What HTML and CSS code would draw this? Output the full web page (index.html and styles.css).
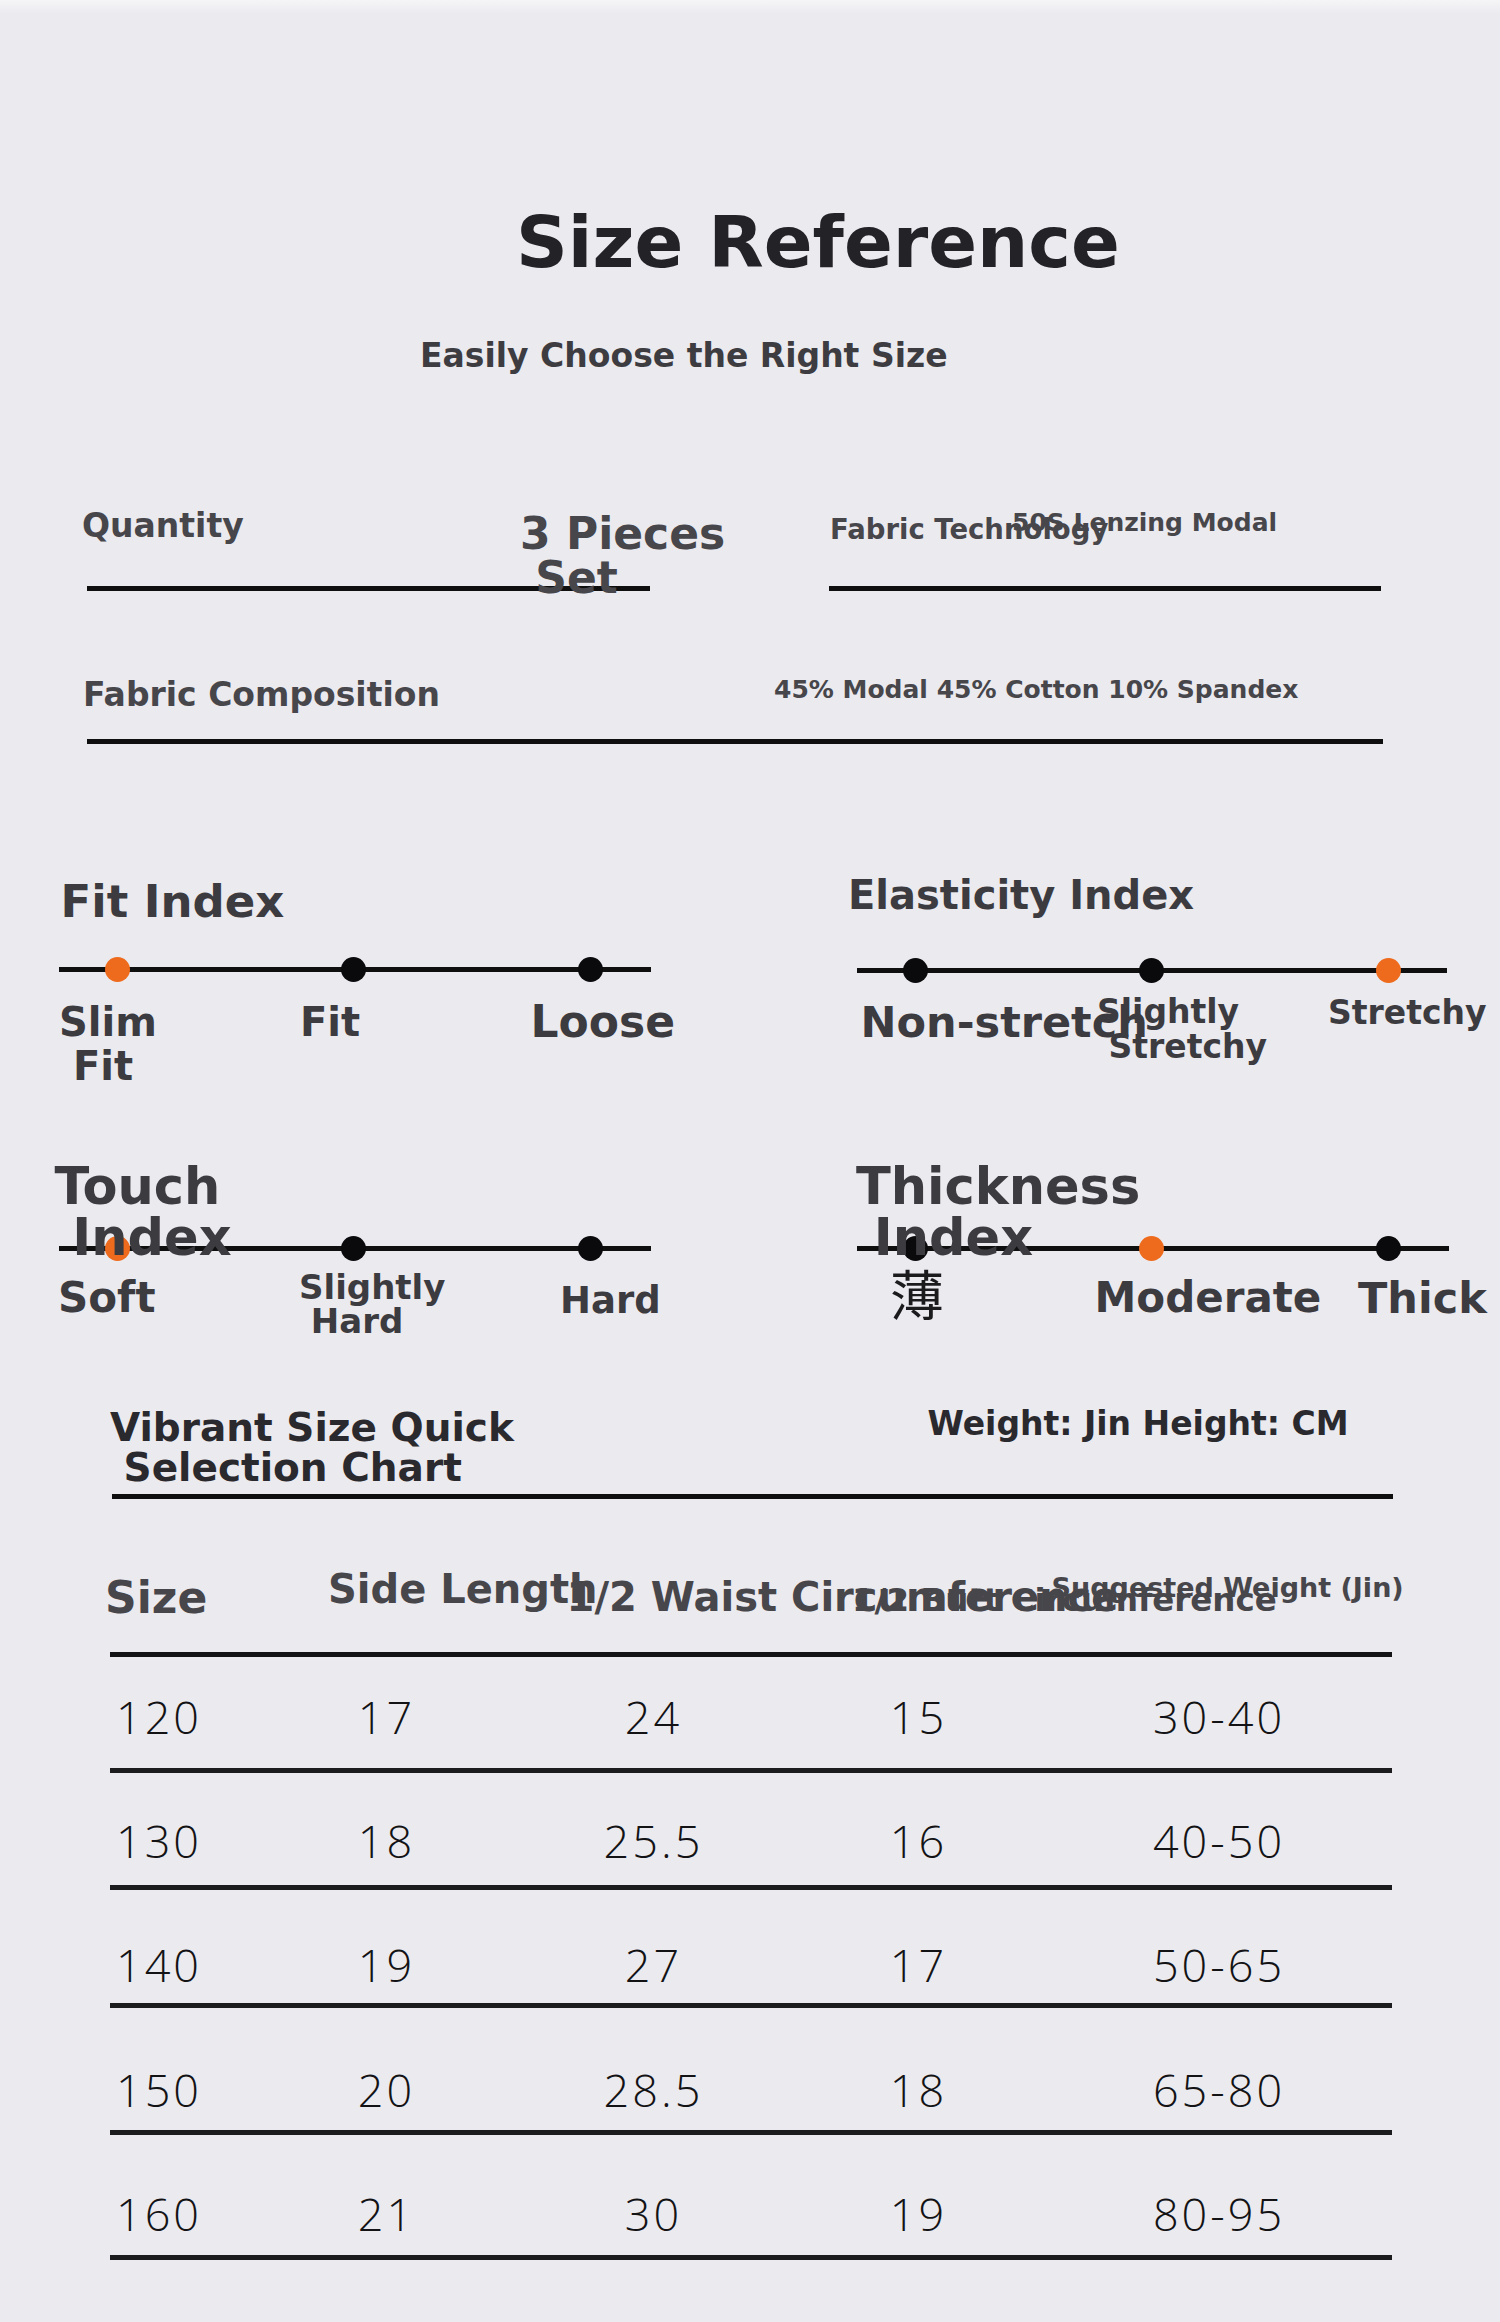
FILE: index.html
```html
<!DOCTYPE html>
<html lang="en">
<head>
<meta charset="utf-8">
<title>Size Reference</title>
<link rel="stylesheet" href="styles.css">
</head>
<body>
<div class="page">
  <header class="hero">
    <h1 class="hero-title">Size Reference</h1>
    <p class="hero-sub">Easily Choose the Right Size</p>
  </header>

  <section class="info">
    <div class="info-row">
      <div class="field qty">
        <span class="qty-label">Quantity</span>
        <span class="qty-value">3 Pieces<br>&nbsp;Set</span>
      </div>
      <div class="field tech">
        <span class="tech-label">Fabric Technology</span>
        <span class="tech-value">50S Lenzing Modal</span>
      </div>
    </div>
    <div class="field comp">
      <span class="comp-label">Fabric Composition</span>
      <span class="comp-value">45% Modal 45% Cotton 10% Spandex</span>
    </div>
  </section>

  <section class="indexes">
    <div class="idx">
      <h2 class="idx-title t-fit">Fit Index</h2>
      <div class="track track-a"><i class="dot on"></i><i class="dot"></i><i class="dot"></i></div>
      <div class="labels labels-a">
        <span class="lbl l-slim">Slim<br>&nbsp;Fit</span>
        <span class="lbl l-fit">Fit</span>
        <span class="lbl l-loose">Loose</span>
      </div>
    </div>
    <div class="idx">
      <h2 class="idx-title t-elastic">Elasticity Index</h2>
      <div class="track track-b"><i class="dot"></i><i class="dot"></i><i class="dot on"></i></div>
      <div class="labels labels-a">
        <span class="lbl l-non">Non-stretch</span>
        <span class="lbl l-sls">Slightly<br>&nbsp;Stretchy</span>
        <span class="lbl l-str">Stretchy</span>
      </div>
    </div>
    <div class="idx">
      <h2 class="idx-title t-two">Touch<br>&nbsp;Index</h2>
      <div class="track track-c"><i class="dot on"></i><i class="dot"></i><i class="dot"></i></div>
      <div class="labels labels-b">
        <span class="lbl l-soft">Soft</span>
        <span class="lbl l-slh">Slightly<br>&nbsp;Hard</span>
        <span class="lbl l-hard">Hard</span>
      </div>
    </div>
    <div class="idx">
      <h2 class="idx-title t-two t-thick">Thickness<br>&nbsp;Index</h2>
      <div class="track track-c"><i class="dot"></i><i class="dot on"></i><i class="dot"></i></div>
      <div class="labels labels-b">
        <span class="lbl l-bo">薄</span>
        <span class="lbl l-mod">Moderate</span>
        <span class="lbl l-thk">Thick</span>
      </div>
    </div>
  </section>

  <section class="chart">
    <h2 class="chart-title">Vibrant Size Quick<br>&nbsp;Selection Chart</h2>
    <p class="chart-unit">Weight: Jin Height: CM</p>
  </section>

  <section class="table">
    <div class="thead">
      <span class="th th-size">Size</span>
      <span class="th th-side">Side Length</span>
      <span class="th th-waist">1/2 Waist Circumference</span>
      <span class="th th-hem">1/2 Butt Circumference</span>
      <span class="th th-weight">Suggested Weight (Jin)</span>
    </div>
    <div class="tr r1"><span class="td">120</span><span class="td">17</span><span class="td">24</span><span class="td">15</span><span class="td">30-40</span></div>
    <div class="tr r2"><span class="td">130</span><span class="td">18</span><span class="td">25.5</span><span class="td">16</span><span class="td">40-50</span></div>
    <div class="tr r3"><span class="td">140</span><span class="td">19</span><span class="td">27</span><span class="td">17</span><span class="td">50-65</span></div>
    <div class="tr r4"><span class="td">150</span><span class="td">20</span><span class="td">28.5</span><span class="td">18</span><span class="td">65-80</span></div>
    <div class="tr r5"><span class="td">160</span><span class="td">21</span><span class="td">30</span><span class="td">19</span><span class="td">80-95</span></div>
  </section>
</div>
</body>
</html>
```

FILE: styles.css
```css
html, body {
  margin: 0;
  padding: 0;
  background: #ebeaef;
}

.page {
  width: 1500px;
  min-height: 2322px;
  overflow: hidden;
  background: linear-gradient(#f5f5f7 0, #ebeaef 14px) no-repeat;
  background-color: #ebeaef;
  font-family: "DejaVu Sans", "Noto Sans CJK SC", sans-serif;
  font-weight: 700;
  color: #3c3b40;
}

h1, h2, p {
  margin: 0;
  font-weight: 700;
}

/* ---------- hero ---------- */
.hero {
  padding-top: 206px;
}
.hero-title {
  font-size: 72px;
  line-height: 72px;
  margin-left: 516px;
  color: #232226;
}
.hero-sub {
  font-size: 33px;
  line-height: 40px;
  margin: 58px 0 0 420px;
  color: #3d3c41;
}

/* ---------- info ---------- */
.info {
  margin-top: 124px;
  padding-left: 87px;
  color: #47464b;
}
.info-row {
  display: grid;
  grid-template-columns: 563px 552px;
  column-gap: 179px;
}
.field {
  border-bottom: 5px solid #0f0f10;
  white-space: nowrap;
}
.qty, .tech {
  height: 86px;
}
.qty {
  display: flex;
  align-items: flex-start;
}
.qty-label {
  flex: none;
  width: 438px;
  font-size: 33px;
  line-height: 40px;
  margin: 5.6px 0 0 -5px;
}
.qty-value {
  font-size: 44px;
  line-height: 44px;
  margin-top: 11.8px;
}
.tech {
  display: grid;
  align-items: start;
}
.tech-label, .tech-value {
  grid-area: 1 / 1;
}
.tech-label {
  font-size: 27.5px;
  line-height: 34px;
  margin: 11.5px 0 0 1px;
}
.tech-value {
  font-size: 25px;
  line-height: 30px;
  margin: 8.4px 0 0 183px;
}
.comp {
  width: 1296px;
  height: 79px;
  margin-top: 69px;
  display: flex;
  align-items: flex-start;
}
.comp-label {
  flex: none;
  width: 691px;
  font-size: 33px;
  line-height: 40px;
  margin: 14.6px 0 0 -4px;
}
.comp-value {
  font-size: 25px;
  line-height: 30px;
  margin-top: 15.4px;
}

/* ---------- indexes ---------- */
.indexes {
  display: grid;
  grid-template-columns: 798px 643px;
  row-gap: 73px;
  padding-left: 59px;
  margin-top: 126px;
}
.idx {
  display: flex;
  flex-direction: column;
  align-items: flex-start;
}
.idx-title {
  white-space: nowrap;
  position: relative;
  z-index: 1;
}
.t-fit {
  font-size: 45px;
  line-height: 50px;
  margin: 7.4px 0 0 1.5px;
}
.t-elastic {
  font-size: 40px;
  line-height: 50px;
  margin: 0 0 0 -9px;
}
.t-two {
  font-size: 51px;
  line-height: 51px;
  margin-left: -4.5px;
}
.t-thick {
  margin-left: -1px;
}

.track {
  box-sizing: border-box;
  width: 592px;
  height: 25px;
  display: flex;
  gap: 211.5px;
  padding-left: 45.5px;
  background: linear-gradient(#0f0f10, #0f0f10) 0 10px / 100% 5px no-repeat;
}
.track-a { margin-top: 30.1px; }
.track-b { margin-top: 37.5px; width: 590px; }
.track-c { margin-top: -26.5px; }

.dot {
  flex: none;
  width: 25px;
  height: 25px;
  border-radius: 50%;
  background: #0a0a0c;
}
.dot.on {
  background: #ee6b1d;
}

.labels {
  display: grid;
  grid-template-columns: repeat(3, 236.5px);
  align-items: start;
  white-space: nowrap;
}
.labels-a { margin-top: 17.5px; }
.labels-b { margin-top: 8.5px; }

.lbl {
  font-size: 40px;
  line-height: 44px;
}
.l-slim { margin-left: 0; }
.l-fit { margin-left: 4.5px; }
.l-loose { font-size: 44px; margin-left: -1.5px; }

.l-non { font-size: 43px; margin-left: 3.6px; }
.l-sls { font-size: 33px; line-height: 35px; margin: -6px 0 0 3.5px; }
.l-str { font-size: 33px; line-height: 35px; margin: -5px 0 0 -2px; }

.l-soft { font-size: 42px; margin: 6.5px 0 0 -1px; }
.l-slh { font-size: 34px; line-height: 34px; margin-left: 3.5px; }
.l-hard { font-size: 37px; margin: 9px 0 0 28px; }

.l-bo {
  font-family: "Noto Sans CJK SC", sans-serif;
  font-weight: 400;
  font-size: 54px;
  line-height: 54px;
  margin: -3.5px 0 0 33px;
  color: #1b1b1d;
}
.l-mod { font-size: 42px; margin: 6.5px 0 0 1px; }
.l-thk { font-size: 43px; margin: 6px 0 0 28px; }

/* ---------- chart header ---------- */
.chart {
  box-sizing: content-box;
  width: 1281px;
  height: 94px;
  margin: 62px 0 0 112px;
  border-bottom: 5px solid #0f0f10;
  display: flex;
  align-items: flex-start;
  color: #2a292e;
  white-space: nowrap;
}
.chart-title {
  flex: none;
  width: 817.5px;
  font-size: 39px;
  line-height: 40px;
  margin: 8.5px 0 0 -2px;
}
.chart-unit {
  font-size: 33px;
  line-height: 40px;
  margin-top: 3.6px;
}

/* ---------- table ---------- */
.table {
  width: 1282px;
  margin-left: 110px;
}
.thead {
  height: 92px;
  margin-top: 61px;
  border-bottom: 5px solid #141416;
  display: grid;
  align-items: start;
  color: #47464b;
  white-space: nowrap;
}
.th {
  grid-area: 1 / 1;
}
.th-size { font-size: 44px; line-height: 50px; margin: 12.8px 0 0 -5px; }
.th-side { font-size: 40px; line-height: 50px; margin: 4px 0 0 218px; }
.th-waist { font-size: 40px; line-height: 50px; margin: 12px 0 0 456.6px; }
.th-hem { font-size: 32.5px; line-height: 50px; margin: 14.8px 0 0 742px; }
.th-weight { font-size: 27px; line-height: 30px; margin: 12.7px 0 0 941.6px; }

.tr {
  display: grid;
  grid-template-columns: 165px 220px 314px 216px 367px;
  border-bottom: 5px solid #1c1c1e;
  font-family: "Open Sans", "Noto Sans", sans-serif;
  font-weight: 300;
  font-size: 45px;
  line-height: 50px;
  letter-spacing: 3px;
  color: #131315;
}
.td {
  text-align: center;
  padding-left: 3px;
}
.td:first-child {
  text-align: left;
  padding-left: 6px;
}
.td:last-child {
  padding-left: 21px;
}
.r1 { padding: 34.6px 0 26.4px; }
.r2 { padding: 42.6px 0 19.4px; }
.r3 { padding: 49.6px 0 13.4px; }
.r4 { padding: 56.6px 0 15.4px; }
.r5 { padding: 53.6px 0 16.4px; }
```
